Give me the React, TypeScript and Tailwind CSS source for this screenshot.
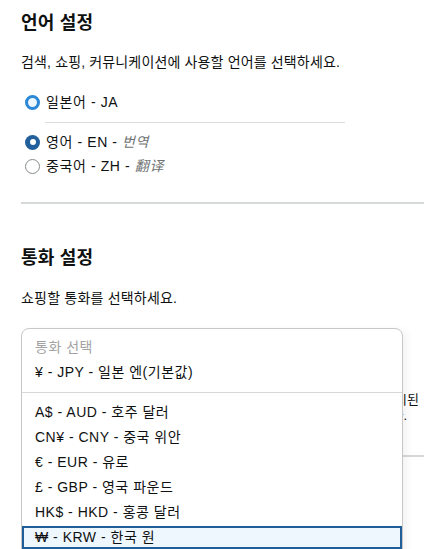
import React from "react";

const currencies = [
  "A$ - AUD - 호주 달러",
  "CN¥ - CNY - 중국 위안",
  "€ - EUR - 유로",
  "£ - GBP - 영국 파운드",
  "HK$ - HKD - 홍콩 달러",
];

export default function App() {
  return (
    <div className="relative w-[424px] h-[549px] overflow-hidden bg-white text-[#0f1111] font-['Liberation_Sans','Noto_Sans_CJK_KR',sans-serif]">
      <div className="pl-[21px] pt-[11px]">
        <h2 className="h-[24px] leading-[24px] text-[18px] font-bold tracking-[0.2px]">언어 설정</h2>
        <p className="mt-[17px] h-[20px] leading-[20px] text-[14px] tracking-[0.15px] whitespace-nowrap">
          검색, 쇼핑, 커뮤니케이션에 사용할 언어를 선택하세요.
        </p>

        <div className="mt-[20px] ml-[4px] flex items-center h-[20px] gap-[6px]">
          <span className="w-[15px] h-[15px] rounded-full border-[3px] border-[#2a88d6] bg-[#eef7fd] shrink-0" />
          <span className="text-[14px] leading-[20px] tracking-[0.6px] whitespace-nowrap">일본어 - JA</span>
        </div>

        <div className="mt-[10px] ml-[24px] w-[300px] h-px bg-[#dddddd]" />

        <div className="mt-[9px] ml-[4px] flex items-center h-[20px] gap-[6px]">
          <span className="w-[15px] h-[15px] rounded-full bg-[#22609d] flex items-center justify-center shrink-0">
            <span className="w-[6px] h-[6px] rounded-full bg-white" />
          </span>
          <span className="text-[14px] leading-[20px] tracking-[0.6px] whitespace-nowrap">
            영어 - EN - <span className="italic text-[#6f7373]">번역</span>
          </span>
        </div>

        <div className="mt-[4px] ml-[4px] flex items-center h-[20px] gap-[6px]">
          <span className="w-[15px] h-[15px] rounded-full border border-[#888c8c] bg-white shrink-0" />
          <span className="text-[14px] leading-[20px] tracking-[0.6px] whitespace-nowrap">
            중국어 - ZH -{" "}
            <span className="italic text-[#6f7373] font-['Liberation_Sans','Noto_Sans_CJK_SC',sans-serif]">翻译</span>
          </span>
        </div>

        <div className="mt-[26px] h-[2px] bg-[#d5d9d9]" />

        <h2 className="mt-[42px] h-[24px] leading-[24px] text-[18px] font-bold tracking-[0.2px]">통화 설정</h2>
        <p className="mt-[18px] h-[20px] leading-[20px] text-[14px] tracking-[0.2px] whitespace-nowrap">
          쇼핑할 통화를 선택하세요.
        </p>

        {/* underlying page content (mostly covered by the open menu) */}
        <div className="mt-[20px] h-[64px]" />
        <div className="text-[13px] leading-[16px] whitespace-nowrap">
          <div className="text-right pr-[5px]">결제 시 표시된</div>
          <div className="text-right pr-[17px]">적용됩니다.</div>
        </div>
        <div className="mt-[31px] h-[2px] bg-[#d5d9d9]" />
      </div>

      {/* open dropdown menu */}
      <div className="absolute left-[21px] top-[328px] w-[382px] h-[240px] bg-white border border-[#c7c7c7] rounded-t-[8px] shadow-[4px_2px_8px_rgba(0,0,0,0.05)] text-[14px] tracking-[0.5px]">
        <div className="pt-[6px]">
          <div className="h-[25px] leading-[25px] pl-[13px] text-[#a2a2a2] whitespace-nowrap">통화 선택</div>
          <div className="h-[25px] leading-[25px] pl-[13px] whitespace-nowrap">¥ - JPY - 일본 엔(기본값)</div>
        </div>
        <div className="mt-[7px] h-px bg-[#d8d8d8]" />
        <div className="pt-[7px]">
          {currencies.map((c) => (
            <div key={c} className="h-[25px] leading-[25px] pl-[13px] whitespace-nowrap">
              {c}
            </div>
          ))}
          <div className="mt-px h-[23px] border-2 border-[#1f5e99] bg-[#eef7fd] leading-[19px] pl-[11px] whitespace-nowrap">
            ₩ - KRW - 한국 원
          </div>
        </div>
      </div>
    </div>
  );
}
